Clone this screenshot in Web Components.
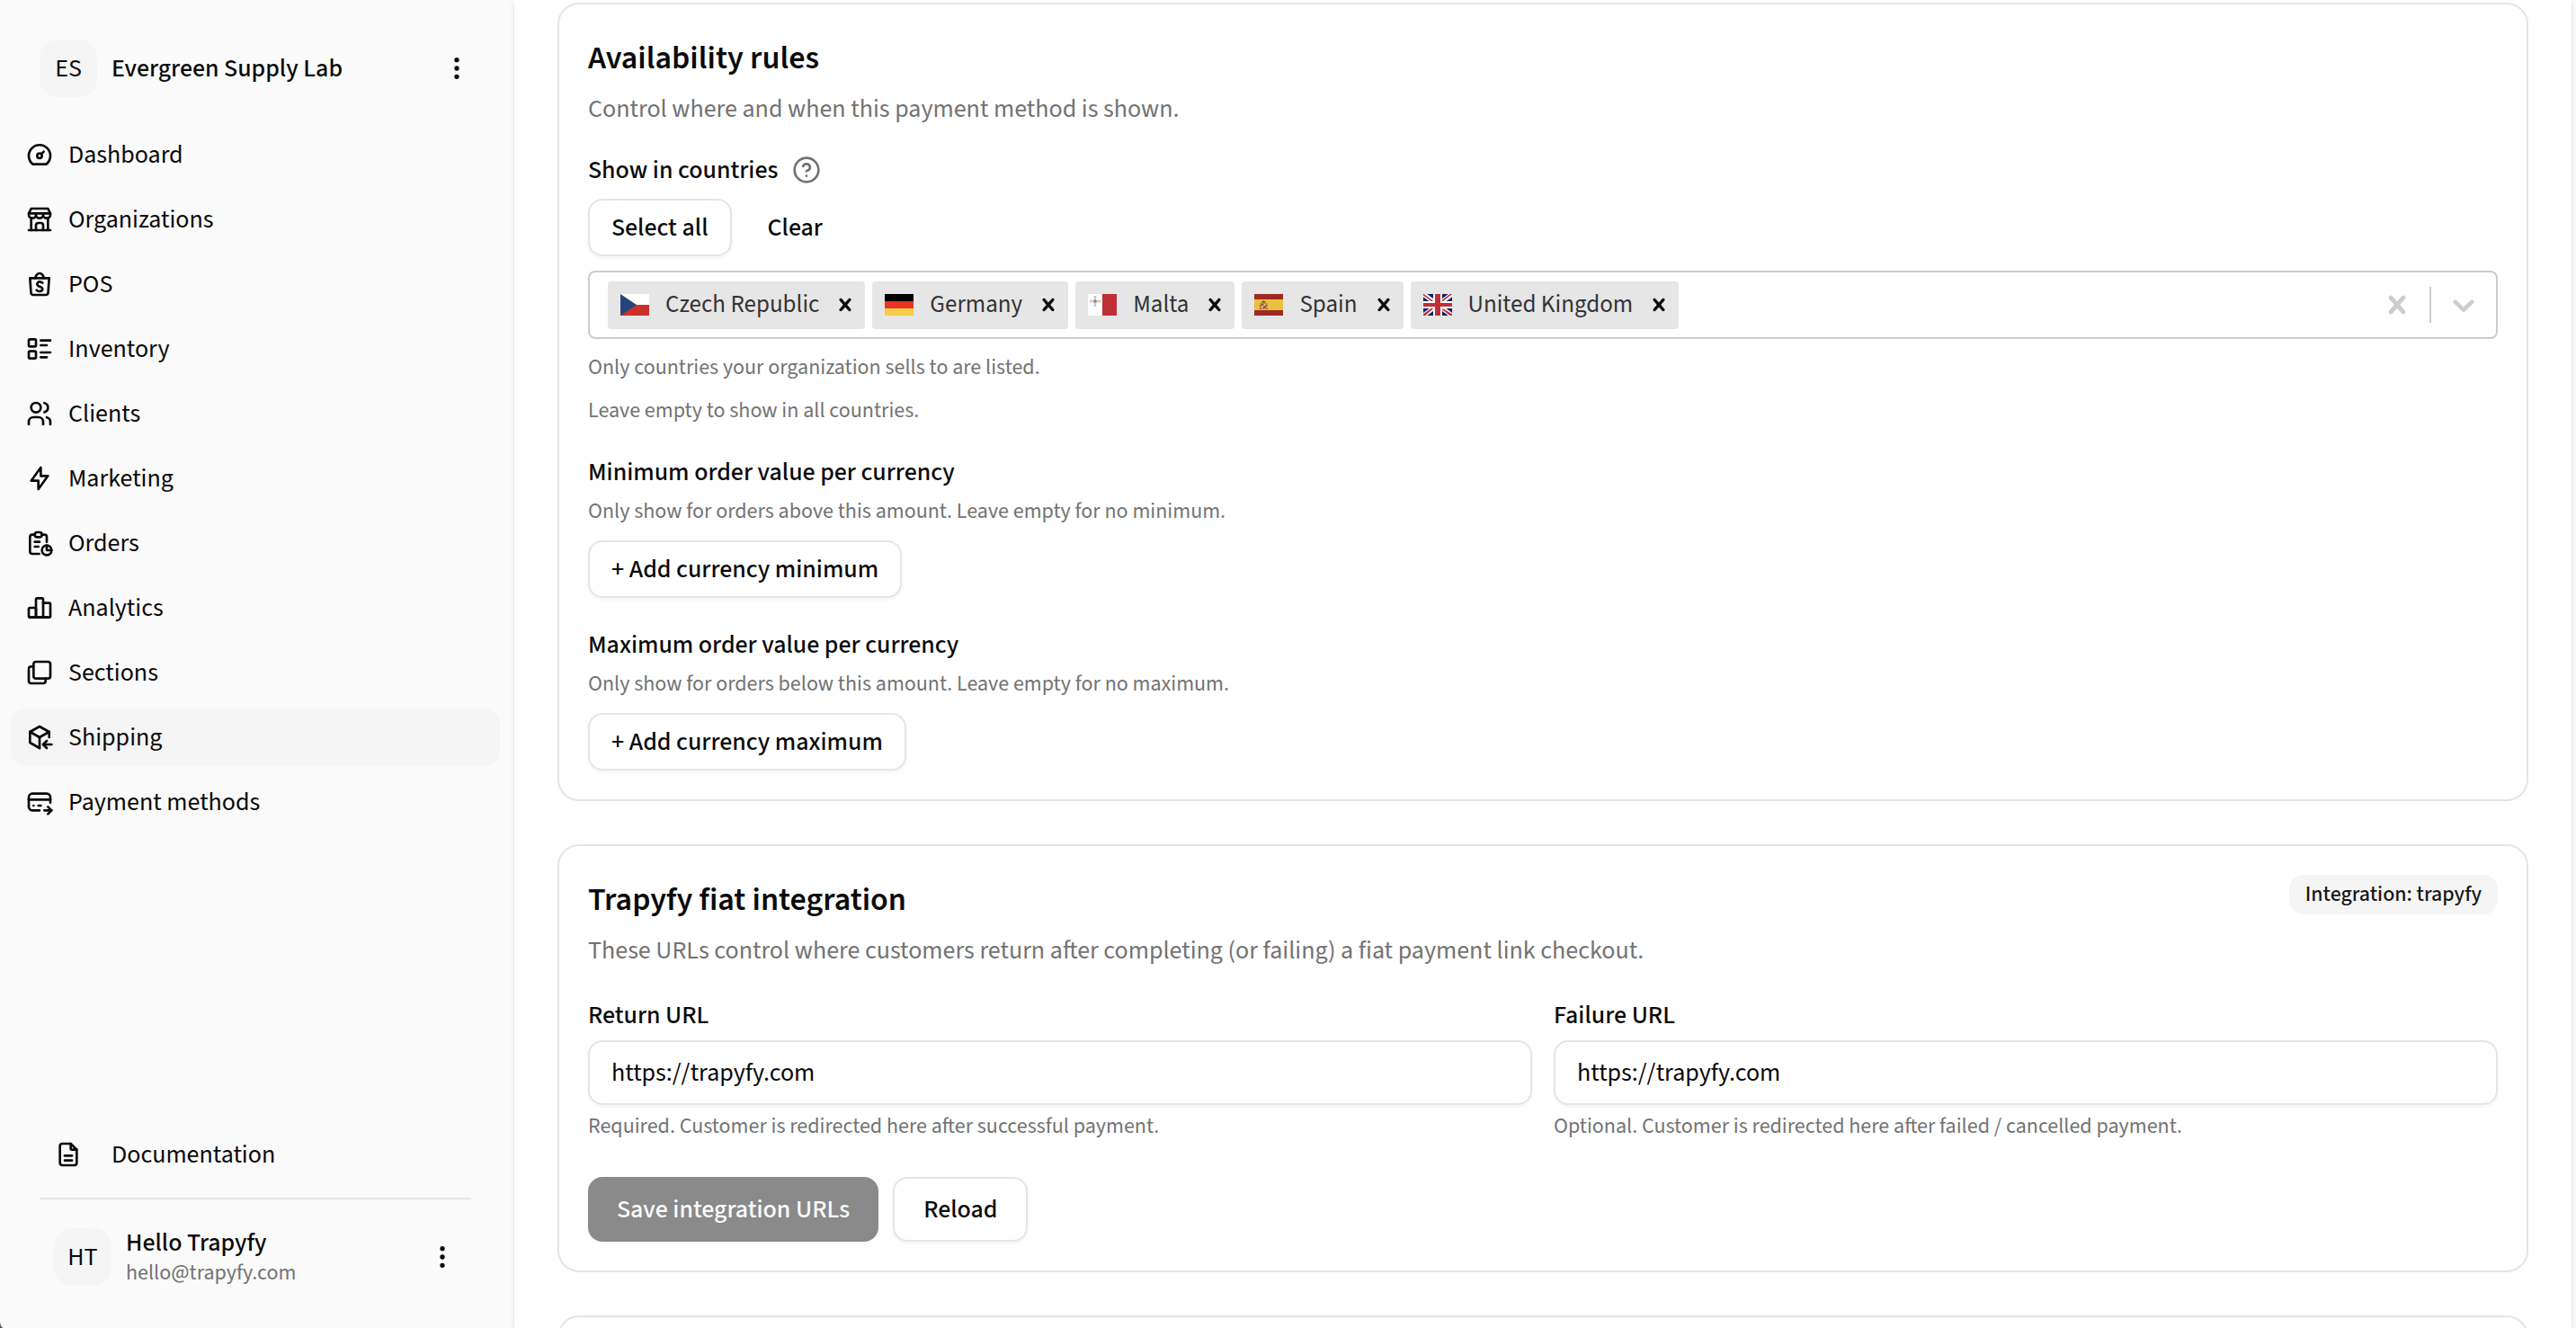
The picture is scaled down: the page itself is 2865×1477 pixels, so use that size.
<!DOCTYPE html>
<html lang="en">
<head>
<meta charset="utf-8">
<meta name="viewport" content="width=device-width, initial-scale=1">
<title>Payment method settings</title>
<style>
  :root {
    --text: #0a0a0a;
    --muted: #737373;
    --line: #e5e5e5;
    --soft: #f5f5f5;
    --base: 28px;
    --small: 24px;
    --title: 36px;
  }
  html { background: #46606f; }
  body {
    margin: 0;
    background: #fafafa;
    border-bottom-left-radius: 4px 8px;
    color: var(--text);
    font-family: "Source Sans 3", "Source Sans Pro", "Noto Sans CJK SC", sans-serif;
    font-size: var(--base);
    line-height: 40px;
  }
</style>
</head>
<body>
<app-shell>
  <side-bar slot="sidebar">
    <account-row slot="org" initials="ES" name="Evergreen Supply Lab"></account-row>
    <nav-item icon="dashboard">Dashboard</nav-item>
    <nav-item icon="store">Organizations</nav-item>
    <nav-item icon="bag">POS</nav-item>
    <nav-item icon="list">Inventory</nav-item>
    <nav-item icon="users">Clients</nav-item>
    <nav-item icon="bolt">Marketing</nav-item>
    <nav-item icon="report">Orders</nav-item>
    <nav-item icon="chart">Analytics</nav-item>
    <nav-item icon="layers">Sections</nav-item>
    <nav-item icon="package" active>Shipping</nav-item>
    <nav-item icon="card">Payment methods</nav-item>
    <nav-item slot="docs" icon="file" wide>Documentation</nav-item>
    <account-row slot="user" initials="HT" name="Hello Trapyfy" email="hello@trapyfy.com"></account-row>
  </side-bar>

  <settings-card heading="Availability rules" description="Control where and when this payment method is shown.">
    <country-select label="Show in countries">
      <country-chip code="cz">Czech Republic</country-chip>
      <country-chip code="de">Germany</country-chip>
      <country-chip code="mt">Malta</country-chip>
      <country-chip code="es">Spain</country-chip>
      <country-chip code="gb">United Kingdom</country-chip>
      <help-text slot="help">Only countries your organization sells to are listed.</help-text>
      <help-text slot="help">Leave empty to show in all countries.</help-text>
    </country-select>
    <currency-limit label="Minimum order value per currency" help="Only show for orders above this amount. Leave empty for no minimum." action="+ Add currency minimum"></currency-limit>
    <currency-limit label="Maximum order value per currency" help="Only show for orders below this amount. Leave empty for no maximum." action="+ Add currency maximum"></currency-limit>
  </settings-card>

  <settings-card heading="Trapyfy fiat integration" description="These URLs control where customers return after completing (or failing) a fiat payment link checkout.">
    <status-badge slot="aside">Integration: trapyfy</status-badge>
    <url-form></url-form>
  </settings-card>

  <settings-card></settings-card>
</app-shell>

<script>
const ICONS = {
  dashboard: '<path d="M10 13a2 2 0 1 0 4 0a2 2 0 1 0 -4 0"/><path d="M13.45 11.55l2.05 -2.05"/><path d="M6.4 20a9 9 0 1 1 11.2 0z"/>',
  store: '<path d="M3 21h18"/><path d="M3 7v1a3 3 0 0 0 6 0v-1m0 1a3 3 0 0 0 6 0v-1m0 1a3 3 0 0 0 6 0v-1h-18l2 -4h14l2 4"/><path d="M5 21v-10.15"/><path d="M19 21v-10.15"/><path d="M9 21v-4a2 2 0 0 1 2 -2h2a2 2 0 0 1 2 2v4"/>',
  bag: '<path d="M4 7l.867 12.143a2 2 0 0 0 2 1.857h10.276a2 2 0 0 0 2 -1.857l.867 -12.143h-16z"/><path d="M8.5 7c0 -1.653 1.5 -4 3.5 -4s3.5 2.347 3.5 4"/><path d="M9.5 17c.413 .462 1 1 2.5 1s2.5 -.897 2.5 -2s-1 -1.5 -2.5 -2s-2 -1.47 -2 -2c0 -1.104 1 -2 2 -2s1.5 0 2.5 1"/>',
  list: '<path d="M13 5h8"/><path d="M13 9h5"/><path d="M13 15h8"/><path d="M13 19h5"/><rect x="3" y="4" width="6" height="6" rx="1"/><rect x="3" y="14" width="6" height="6" rx="1"/>',
  users: '<path d="M5 7a4 4 0 1 0 8 0a4 4 0 1 0 -8 0"/><path d="M3 21v-2a4 4 0 0 1 4 -4h4a4 4 0 0 1 4 4v2"/><path d="M16 3.13a4 4 0 0 1 0 7.75"/><path d="M21 21v-2a4 4 0 0 0 -3 -3.85"/>',
  bolt: '<path d="M13 3v7h6l-8 11v-7h-6l8 -11"/>',
  report: '<path d="M8 5h-2a2 2 0 0 0 -2 2v12a2 2 0 0 0 2 2h5.697"/><path d="M18 14v4h4"/><path d="M18 11v-4a2 2 0 0 0 -2 -2h-2"/><rect x="8" y="3" width="6" height="4" rx="2"/><circle cx="18" cy="18" r="4"/><path d="M8 11h4"/><path d="M8 15h3"/>',
  chart: '<rect x="3" y="12" width="6" height="8" rx="1"/><rect x="9" y="4" width="6" height="16" rx="1"/><path d="M15 8h5a1 1 0 0 1 1 1v10a1 1 0 0 1 -1 1h-5"/><path d="M4 20h15"/>',
  layers: '<rect x="7" y="3" width="14" height="14" rx="2"/><path d="M17 17v2a2 2 0 0 1 -2 2h-10a2 2 0 0 1 -2 -2v-10a2 2 0 0 1 2 -2h2"/>',
  package: '<path d="M12 21l-8 -4.5v-9l8 -4.5l8 4.5v4.5"/><path d="M12 12l8 -4.5"/><path d="M12 12v9"/><path d="M12 12l-8 -4.5"/><path d="M22 18h-7"/><path d="M18 15l-3 3l3 3"/>',
  card: '<path d="M12 19h-6a3 3 0 0 1 -3 -3v-8a3 3 0 0 1 3 -3h12a3 3 0 0 1 3 3v4.5"/><path d="M3 10h18"/><path d="M16 19h6"/><path d="M19 16l3 3l-3 3"/><path d="M7 15h.01"/><path d="M11 15h2"/>',
  file: '<path d="M14 3v4a1 1 0 0 0 1 1h4"/><path d="M17 21h-10a2 2 0 0 1 -2 -2v-14a2 2 0 0 1 2 -2h7l5 5v11a2 2 0 0 1 -2 2"/><path d="M9 17h6"/><path d="M9 13h6"/>',
  dots: '<circle cx="12" cy="12" r="1"/><circle cx="12" cy="19" r="1"/><circle cx="12" cy="5" r="1"/>',
  help: '<circle cx="12" cy="12" r="10"/><path d="M9.09 9a3 3 0 0 1 5.83 1c0 2 -3 3 -3 3"/><path d="M12 17h.01"/>'
};
const CROSS = '<path d="M14.348 14.849c-0.469 0.469-1.229 0.469-1.697 0l-2.651-3.030-2.651 3.029c-0.469 0.469-1.229 0.469-1.697 0-0.469-0.469-0.469-1.229 0-1.697l2.758-3.15-2.759-3.152c-0.469-0.469-0.469-1.228 0-1.697s1.228-0.469 1.697 0l2.652 3.031 2.651-3.031c0.469-0.469 1.228-0.469 1.697 0s0.469 1.229 0 1.697l-2.758 3.152 2.758 3.15c0.469 0.469 0.469 1.229 0 1.698z"/>';
const CHEVRON = '<path d="M4.516 7.548c0.436-0.446 1.043-0.481 1.576 0l3.908 3.747 3.908-3.747c0.533-0.481 1.141-0.446 1.574 0 0.436 0.445 0.408 1.197 0 1.615-0.406 0.418-4.695 4.502-4.695 4.502-0.217 0.223-0.502 0.335-0.787 0.335s-0.57-0.112-0.789-0.335c0 0-4.287-4.084-4.695-4.502s-0.436-1.17 0-1.615z"/>';
const FLAGS = {
  cz: '<path fill="#fff" d="M0 0h32v12H0z"/><path fill="#c9302a" d="M0 12h32v12H0z"/><path fill="#24457a" d="M0 0l18 12L0 24z"/>',
  de: '<path d="M0 0h32v8H0z"/><path fill="#ea3323" d="M0 8h32v8H0z"/><path fill="#f7ce46" d="M0 16h32v8H0z"/>',
  mt: '<path fill="#fff" d="M0 0h16v24H0z"/><path fill="#be2e34" d="M16 0h16v24H16z"/><g fill="none" stroke="#a89a9c" stroke-width="1"><path d="M8 3v3M8 10v3M3 8h3M10 8h3"/><circle cx="8" cy="8" r="1.800"/></g><path stroke="#c58a8e" stroke-width=".8" d="M6.500 2.800h3M6.500 13.200h3M2.800 6.500v3M13.200 6.500v3"/><path stroke="#666" stroke-width=".8" d="M7 7l2 2M9 7l-2 2"/>',
  es: '<path fill="#9f2a25" d="M0 0h32v24H0z"/><path fill="#e8c141" d="M0 6h32v12H0z"/><path fill="#c98a3c" d="M6 10h1.500v6.500H6zM13 10h1.500v6.500H13z"/><path fill="#a8452f" d="M7.800 10.500h5v3.500a2.500 2.500 0 0 1-5 0z"/><path fill="#8a5a34" d="M8 9.800c0-1.500 1-2.300 2.300-2.300s2.300.8 2.300 2.300z"/><path fill="#d9c7b0" d="M10.300 11h2v2h-2zM8.200 13h2v2.200h-2z"/><path stroke="#8c4a3a" stroke-width=".8" d="M5.500 12.500l2 1M15 12.500l-2 1M5.500 16.500h2.500M12.500 16.500h2.500"/>',
  gb: '<path fill="#0a2463" d="M0 0h32v24H0z"/><path stroke="#fff" stroke-width="5" d="M0 0l32 24M32 0L0 24"/><path fill="#be2e34" d="M0 0h.6L12.600 9H10L0 1.600zM32 24h-2.200l-10-7.500h2.800L32 22.400zM32 0v.2L21.800 8H19L29.600 0zM0 24v-1.800L9.800 15h2.700L2.200 24z"/><path fill="#fff" d="M11 0h10v24H11zM0 8h32v8H0z"/><path fill="#be2e34" d="M13 0h6v24h-6zM0 10h32v4H0z"/>'
};
const icon = (name) => `<svg class="icon" viewBox="0 0 24 24" fill="none" stroke="currentColor" stroke-width="2" stroke-linecap="round" stroke-linejoin="round" aria-hidden="true">${ICONS[name]}</svg>`;

const RESET = `
  :host, *, *::before, *::after { box-sizing: border-box; }
  :host([hidden]) { display: none; }
  svg { display: block; flex: none; }
  .icon { width: 32px; height: 32px; }
  h2, p { margin: 0; }
  button { font: inherit; color: inherit; margin: 0; padding: 0; border: 0; background: none; display: flex; align-items: center; justify-content: center; white-space: nowrap; }
  label { font-weight: 500; }
`;

class BaseElement extends HTMLElement {
  connectedCallback() {
    if (this.shadowRoot) return;
    const root = this.attachShadow({ mode: 'open' });
    root.innerHTML = `<style>${RESET}${this.styles()}</style>${this.render()}`;
  }
  attr(name) { return this.getAttribute(name) || ''; }
  styles() { return ''; }
  render() { return '<slot></slot>'; }
}

customElements.define('app-shell', class extends BaseElement {
  styles() { return `
    :host { display: flex; height: 100vh; overflow: hidden; }
    aside { flex: none; width: 572px; }
    main { flex: 1; min-width: 0; margin-right: 5px; padding: 3px 48px 0; background: #fff; overflow: hidden;
      display: flex; flex-direction: column; gap: 48px;
      box-shadow: 0 2px 6px rgba(0, 0, 0, .1), 0 2px 4px -2px rgba(0, 0, 0, .1); }
  `; }
  render() { return `<aside><slot name="sidebar"></slot></aside><main><slot></slot></main>`; }
});

customElements.define('side-bar', class extends BaseElement {
  styles() { return `
    :host { display: flex; flex-direction: column; height: 100%; padding: 44px 16px 47px 12px; }
    .org { padding: 0 32px 32px; }
    nav { display: flex; flex-direction: column; gap: 8px; }
    footer { margin-top: auto; padding: 0 32px; }
    hr { margin: 16px 0 32px; border: 0; height: 2px; background: var(--line); }
    .user { padding: 0 16px; }
  `; }
  render() { return `
    <div class="org"><slot name="org"></slot></div>
    <nav><slot></slot></nav>
    <footer><slot name="docs"></slot><hr><div class="user"><slot name="user"></slot></div></footer>`; }
});

customElements.define('account-row', class extends BaseElement {
  styles() { return `
    :host { display: flex; align-items: center; gap: 16px; height: 64px; }
    .avatar { flex: none; width: 64px; height: 64px; border-radius: 20px; background: var(--soft); display: flex; align-items: center; justify-content: center; }
    .who { flex: 1; min-width: 0; display: flex; flex-direction: column; }
    .name { font-weight: 500; line-height: 36px; }
    .email { color: var(--muted); font-size: var(--small); line-height: 32px; }
  `; }
  render() {
    const email = this.attr('email');
    return `<span class="avatar">${this.attr('initials')}</span>
    <span class="who"><span class="name">${this.attr('name')}</span>${email ? `<span class="email">${email}</span>` : ''}</span>
    <button type="button" aria-label="More options">${icon('dots')}</button>`;
  }
});

customElements.define('nav-item', class extends BaseElement {
  styles() { return `
    :host { display: block; }
    a { display: flex; align-items: center; gap: 16px; height: 64px; padding: 0 16px; border-radius: 16px; color: inherit; text-decoration: none; }
    :host([active]) a { background: var(--soft); }
    :host([wide]) a { gap: 32px; }
  `; }
  render() { return `<a href="#">${icon(this.attr('icon'))}<span><slot></slot></span></a>`; }
});

customElements.define('settings-card', class extends BaseElement {
  styles() { return `
    :host { display: flex; flex-direction: column; flex: none; gap: 32px; min-height: 96px; padding: 32px; border: 2px solid var(--line); border-radius: 24px; background: #fff; }
    header { display: flex; justify-content: space-between; align-items: flex-start; gap: 32px; }
    header div { display: flex; flex-direction: column; gap: 8px; }
    h2 { font-size: var(--title); font-weight: 600; line-height: 56px; }
    p { color: var(--muted); }
  `; }
  render() {
    if (!this.attr('heading')) return '<slot></slot>';
    return `<header><div><h2>${this.attr('heading')}</h2><p>${this.attr('description')}</p></div><slot name="aside"></slot></header><slot></slot>`;
  }
});

customElements.define('status-badge', class extends BaseElement {
  styles() { return `
    :host { display: flex; align-items: center; height: 44px; padding: 0 18px; border-radius: 16px; background: var(--soft); color: #171717; font-size: var(--small); font-weight: 500; white-space: nowrap; }
  `; }
});

customElements.define('help-text', class extends BaseElement {
  styles() { return `:host { display: block; color: var(--muted); font-size: var(--small); line-height: 32px; }`; }
});

customElements.define('ui-button', class extends BaseElement {
  styles() { return `
    :host { display: inline-flex; }
    button { height: 64px; padding: 0 24px; border: 2px solid var(--line); border-radius: 16px; background: #fff; font-weight: 500; box-shadow: 0 2px 4px rgba(0, 0, 0, .05); }
    :host([size=large]) button { height: 72px; padding: 0 32px; }
    :host([variant=ghost]) button { border-width: 0; background: none; box-shadow: none; }
    :host([variant=primary]) button { border-width: 0; background: #171717; color: #fafafa; opacity: .5; }
  `; }
  render() { return `<button type="button"${this.hasAttribute('disabled') ? ' disabled' : ''}><slot></slot></button>`; }
});

customElements.define('country-chip', class extends BaseElement {
  styles() { return `
    :host { display: flex; align-items: stretch; height: 53px; border-radius: 4px; background: #e6e6e6; }
    .label { display: flex; align-items: center; gap: 18px; padding: 0 7px 0 14px; color: #333; font-size: 27px; white-space: nowrap; }
    .flag { width: 32px; height: 24px; }
    button { width: 44px; }
  `; }
  render() { return `
    <span class="label"><svg class="flag" viewBox="0 0 32 24" aria-hidden="true">${FLAGS[this.attr('code')]}</svg><span><slot></slot></span></span>
    <button type="button" aria-label="Remove"><svg width="28" height="28" viewBox="0 0 20 20" fill="currentColor" aria-hidden="true">${CROSS}</svg></button>`; }
});

customElements.define('country-select', class extends BaseElement {
  styles() { return `
    :host { display: flex; flex-direction: column; gap: 16px; }
    .title { display: flex; align-items: center; gap: 16px; height: 32px; }
    .title button { color: var(--muted); }
    .actions { display: flex; gap: 16px; }
    .control { display: flex; align-items: center; min-height: 76px; border: 2px solid #ccc; border-radius: 8px; background: #fff; }
    .values { flex: 1; min-width: 0; display: flex; flex-wrap: wrap; align-items: center; gap: 8px; padding: 4px 20px; }
    input { flex: 1; min-width: 4px; width: 4px; border: 0; outline: 0; padding: 0; background: none; font: inherit; color: inherit; }
    .tool { color: #ccc; padding: 0 16px; }
    .divider { width: 2px; height: 40px; background: #ccc; }
  `; }
  render() { return `
    <div class="title"><label for="countries">${this.attr('label')}</label><button type="button" aria-label="Help">${icon('help')}</button></div>
    <div class="actions"><ui-button>Select all</ui-button><ui-button variant="ghost">Clear</ui-button></div>
    <div class="control">
      <div class="values"><slot></slot><input id="countries" type="text" role="combobox" aria-expanded="false" autocomplete="off"></div>
      <button class="tool" type="button" aria-label="Clear all"><svg width="40" height="40" viewBox="0 0 20 20" fill="currentColor" aria-hidden="true">${CROSS}</svg></button>
      <span class="divider"></span>
      <button class="tool" type="button" aria-label="Open list"><svg width="40" height="40" viewBox="0 0 20 20" fill="currentColor" aria-hidden="true">${CHEVRON}</svg></button>
    </div>
    <slot name="help"></slot>`; }
});

customElements.define('currency-limit', class extends BaseElement {
  styles() { return `
    :host { display: flex; flex-direction: column; align-items: flex-start; gap: 8px; }
    .name { font-weight: 500; }
    ui-button { margin-top: 8px; }
  `; }
  render() { return `<span class="name">${this.attr('label')}</span><help-text>${this.attr('help')}</help-text><ui-button>${this.attr('action')}</ui-button>`; }
});

customElements.define('url-form', class extends BaseElement {
  styles() { return `
    :host { display: block; }
    form { display: flex; flex-direction: column; gap: 40px; margin: 0; }
    .fields { display: grid; grid-template-columns: 1fr 1fr; gap: 24px; }
    .field { display: flex; flex-direction: column; gap: 8px; min-width: 0; }
    input { width: 100%; height: 72px; padding: 0 24px; border: 2px solid var(--line); border-radius: 16px; background: #fff; font: inherit; color: inherit; box-shadow: 0 2px 4px rgba(0, 0, 0, .05); }
    .actions { display: flex; gap: 16px; }
  `; }
  render() { return `
    <form>
      <div class="fields">
        <div class="field"><label for="return-url">Return URL</label><input id="return-url" type="url" value="https://trapyfy.com"><help-text>Required. Customer is redirected here after successful payment.</help-text></div>
        <div class="field"><label for="failure-url">Failure URL</label><input id="failure-url" type="url" value="https://trapyfy.com"><help-text>Optional. Customer is redirected here after failed / cancelled payment.</help-text></div>
      </div>
      <div class="actions"><ui-button size="large" variant="primary" disabled>Save integration URLs</ui-button><ui-button size="large">Reload</ui-button></div>
    </form>`; }
});
</script>
</body>
</html>
